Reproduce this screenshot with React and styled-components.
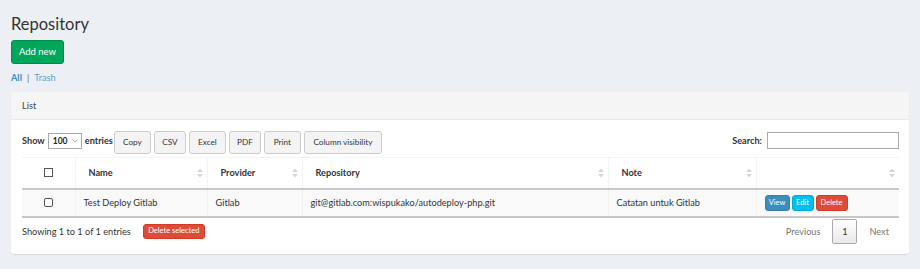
import styled, { createGlobalStyle } from 'styled-components'

const Global = createGlobalStyle`
  html, body {
    margin: 0;
    padding: 0;
    background: #ecf0f5;
    font-family: 'Lato', 'Open Sans', sans-serif;
    color: #333;
  }
  * { box-sizing: border-box; }
`

const Page = styled.div`
  padding: 12px 11px 15px;
`

const Title = styled.h1`
  margin: 0;
  font-size: 16.5px;
  font-weight: 400;
  line-height: 24px;
`

const Btn = styled.button`
  font-family: inherit;
  border-radius: 3px;
  cursor: pointer;
  white-space: nowrap;
  border: 1px solid ${p => p.$border || 'transparent'};
  background: ${p => p.$bg || '#f4f4f4'};
  color: ${p => p.$color || '#fff'};
  font-size: ${p => p.$size ?? 10}px;
  height: ${p => p.$h ?? 23}px;
  padding: 0 ${p => p.$px ?? 10}px;
  line-height: 1;
`

const Tabs = styled.div`
  margin-top: 6px;
  font-size: 9.2px;
  display: flex;
  gap: 5px;
  align-items: center;
  height: 14px;
`

const TabLink = styled.span`
  font-weight: ${p => (p.$active ? 700 : 400)};
  color: ${p => (p.$active ? '#3c8dbc' : '#5a9fcf')};
`

const Sep = styled.span`
  color: #666;
`

const Box = styled.div`
  margin-top: 8px;
  background: #fff;
  border-radius: 3px;
  box-shadow: 0 1px 1px rgba(0, 0, 0, 0.08);
`

const BoxHeader = styled.div`
  height: 28px;
  background: #f5f5f5;
  border-bottom: 1px solid #e8e8e8;
  border-radius: 3px 3px 0 0;
  display: flex;
  align-items: center;
  padding: 0 11px;
  font-size: 9.2px;
  color: #444;
`

const BoxBody = styled.div`
  padding: 11px 10px 10px 11px;
`

const Controls = styled.div`
  display: flex;
  justify-content: space-between;
  align-items: flex-start;
  height: 26px;
`

const Left = styled.div`
  display: flex;
  align-items: flex-start;
`

const Label = styled.label`
  font-size: 9.2px;
  font-weight: 700;
  display: flex;
  align-items: center;
  gap: 3px;
  height: 17px;
  margin-top: 1px;
  color: #333;
`

const Select = styled.div`
  width: 34px;
  height: 16px;
  border: 1px solid #aaa;
  display: flex;
  align-items: center;
  justify-content: space-between;
  padding: 0 3px 0 4px;
  font-size: 8.5px;
  font-weight: 700;
  color: #222;
`

const Chevron = styled.svg`
  display: block;
`

const Buttons = styled.div`
  display: flex;
  gap: 3px;
  margin-left: 1px;
`

const SearchInput = styled.div`
  width: 132px;
  height: 17px;
  border: 1px solid #aaa;
`

const Table = styled.table`
  width: 100%;
  border-collapse: collapse;
  margin-top: 0;
  font-size: 9.2px;
  table-layout: fixed;
`

const Th = styled.th`
  position: relative;
  height: 31px;
  text-align: left;
  padding: 0 13px;
  font-weight: 700;
  color: #333;
  border-top: 1px solid #f4f4f4;
  border-left: 1px solid #f4f4f4;
  border-bottom: 2px solid #c8c8c8;
  &:first-child { border-left: none; }
`

const Td = styled.td`
  height: 28px;
  padding: 0 8px;
  background: #f9f9f9;
  border-left: 1px solid #f0f0f0;
  border-bottom: 2px solid #c8c8c8;
  color: #333;
  &:first-child { border-left: none; }
`

const SortIcon = styled.svg`
  position: absolute;
  right: 4px;
  top: 50%;
  transform: translateY(-50%);
`

const CheckCell = styled.div`
  display: flex;
  justify-content: center;
`

const Check = styled.span`
  width: 9px;
  height: 9px;
  border: 1px solid #555;
  border-radius: ${p => (p.$round ? 2 : 0)}px;
  display: block;
  background: #fff;
`

const Actions = styled.div`
  display: flex;
  gap: 2px;
`

const Footer = styled.div`
  display: flex;
  justify-content: space-between;
  align-items: center;
  margin-top: 1px;
  height: 25px;
`

const Info = styled.div`
  display: flex;
  align-items: center;
  gap: 12px;
  font-size: 9.2px;
  color: #333;
`

const Pager = styled.div`
  display: flex;
  align-items: center;
  gap: 12px;
  font-size: 9.2px;
  color: #777;
  padding-right: 10px;
`

const PageNum = styled.span`
  width: 25px;
  height: 25px;
  border: 1px solid #aaa;
  border-radius: 2px;
  background: linear-gradient(#fff, #e8e8e8);
  display: flex;
  align-items: center;
  justify-content: center;
  color: #333;
`

const Sort = () => (
  <SortIcon width="6" height="9" viewBox="0 0 6 9">
    <path d="M3 0 L6 3.5 H0 Z M3 9 L0 5.5 H6 Z" fill="#d6d6d6" />
  </SortIcon>
)

const cols = [
  { key: 'check', w: 53 },
  { key: 'Name', w: 132 },
  { key: 'Provider', w: 95 },
  { key: 'Repository', w: 306 },
  { key: 'Note', w: 148 },
  { key: '', w: 143 },
]

const exportButtons = [
  ['Copy', 37],
  ['CSV', 32],
  ['Excel', 37],
  ['PDF', 32],
  ['Print', 37],
  ['Column visibility', 78],
]

export default function App() {
  return (
    <>
      <Global />
      <Page>
        <Title>Repository</Title>
        <Btn $bg="#00a65a" $border="#008d4c" $h={24} $size={9.5} $px={0} style={{ marginTop: 4, width: 53 }}>Add new</Btn>
        <Tabs>
          <TabLink $active>All</TabLink>
          <Sep>|</Sep>
          <TabLink>Trash</TabLink>
        </Tabs>
        <Box>
          <BoxHeader>List</BoxHeader>
          <BoxBody>
            <Controls>
              <Left>
                <Label>
                  Show
                  <Select>
                    100
                    <Chevron width="6" height="4" viewBox="0 0 6 4">
                      <path d="M0.5 0.5 L3 3 L5.5 0.5" stroke="#999" strokeWidth="0.8" fill="none" />
                    </Chevron>
                  </Select>
                  entries
                </Label>
                <Buttons>
                  {exportButtons.map(([t, w]) => (
                    <Btn key={t} $bg="#f4f4f4" $border="#ccc" $color="#333" $size={8.2} $px={0} style={{ width: w }}>
                      {t}
                    </Btn>
                  ))}
                </Buttons>
              </Left>
              <Label>
                Search:
                <SearchInput style={{ marginLeft: 2 }} />
              </Label>
            </Controls>
            <Table>
              <colgroup>
                {cols.map(c => <col key={c.key} style={{ width: c.w }} />)}
              </colgroup>
              <thead>
                <tr>
                  <Th><CheckCell><Check /></CheckCell></Th>
                  <Th>Name<Sort /></Th>
                  <Th>Provider<Sort /></Th>
                  <Th>Repository<Sort /></Th>
                  <Th>Note<Sort /></Th>
                  <Th><Sort /></Th>
                </tr>
              </thead>
              <tbody>
                <tr>
                  <Td><CheckCell><Check $round /></CheckCell></Td>
                  <Td>Test Deploy Gitlab</Td>
                  <Td>Gitlab</Td>
                  <Td>git@gitlab.com:wispukako/autodeploy-php.git</Td>
                  <Td>Catatan untuk Gitlab</Td>
                  <Td>
                    <Actions>
                      <Btn $bg="#3c8dbc" $border="#367fa9" $size={7.5} $h={16} $px={0} style={{ width: 25 }}>View</Btn>
                      <Btn $bg="#00c0ef" $border="#00acd6" $size={7.5} $h={16} $px={0} style={{ width: 22 }}>Edit</Btn>
                      <Btn $bg="#dd4b39" $border="#d73925" $size={7.5} $h={16} $px={0} style={{ width: 32 }}>Delete</Btn>
                    </Actions>
                  </Td>
                </tr>
              </tbody>
            </Table>
            <Footer>
              <Info>
                Showing 1 to 1 of 1 entries
                <Btn $bg="#dd4b39" $border="#d73925" $size={7.5} $h={15} $px={0} style={{ width: 62 }}>Delete selected</Btn>
              </Info>
              <Pager>
                <span>Previous</span>
                <PageNum>1</PageNum>
                <span>Next</span>
              </Pager>
            </Footer>
          </BoxBody>
        </Box>
      </Page>
    </>
  )
}
